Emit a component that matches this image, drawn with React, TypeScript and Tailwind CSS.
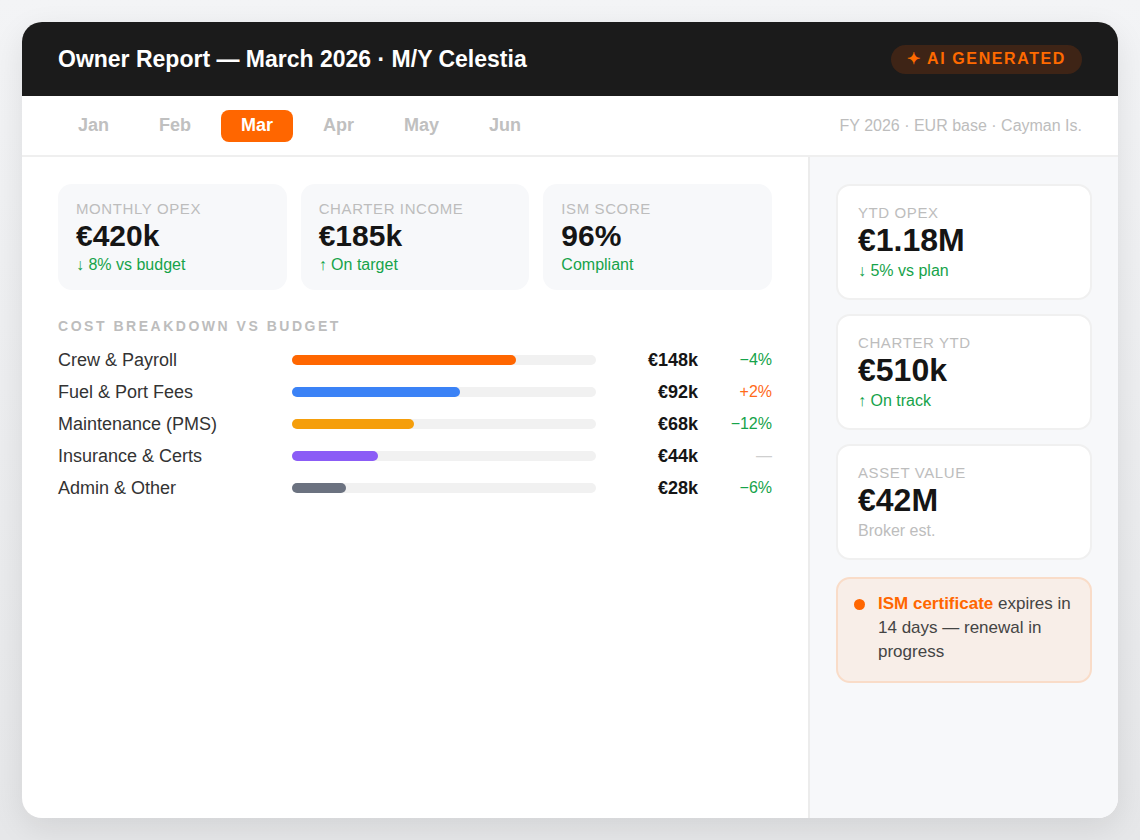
import React from "react";

interface costRowProps {
    label: string;
    pct: number;
    bar: string;
    value: string;
    delta: string;
    deltaColor: string;
}

const costRows: costRowProps[] = [
    { label: "Crew & Payroll", pct: 73.7, bar: "bg-[#ff6600]", value: "€148k", delta: "−4%", deltaColor: "text-[#16a34a]" },
    { label: "Fuel & Port Fees", pct: 55.3, bar: "bg-[#3b82f6]", value: "€92k", delta: "+2%", deltaColor: "text-[#ff6a1a]" },
    { label: "Maintenance (PMS)", pct: 40.1, bar: "bg-[#f59e0b]", value: "€68k", delta: "−12%", deltaColor: "text-[#16a34a]" },
    { label: "Insurance & Certs", pct: 28.3, bar: "bg-[#8b5cf6]", value: "€44k", delta: "—", deltaColor: "text-[#cfcfcf]" },
    { label: "Admin & Other", pct: 17.8, bar: "bg-[#6b7280]", value: "€28k", delta: "−6%", deltaColor: "text-[#16a34a]" },
];

const months = ["Jan", "Feb", "Mar", "Apr", "May", "Jun"];

const StatCard = ({ label, value, sub }: { label: string; value: string; sub: string }) => (
    <div className="flex-1 h-[106px] rounded-[14px] bg-[#f7f8fa] px-[18px] pt-[16px]">
        <div className="text-[15px] leading-[18px] text-[#bdbdbd] uppercase tracking-[0.04em]">{label}</div>
        <div className="text-[30px] leading-[36px] font-bold text-[#151515]">{value}</div>
        <div className="text-[16px] leading-[22px] text-[#16a34a]">{sub}</div>
    </div>
);

const SideCard = ({ label, value, sub, subColor }: { label: string; value: string; sub: string; subColor: string }) => (
    <div className="h-[116px] rounded-[14px] bg-white border-2 border-[#f0f0f0] px-[20px] pt-[18px]">
        <div className="text-[15px] leading-[18px] text-[#bdbdbd] uppercase tracking-[0.04em]">{label}</div>
        <div className="text-[32px] leading-[36px] font-bold text-[#151515]">{value}</div>
        <div className={`text-[16px] leading-[25px] ${subColor}`}>{sub}</div>
    </div>
);

export default function App() {
    return (
        <div
            className="w-[1140px] h-[840px] bg-gradient-to-b from-[#f3f4f6] to-[#e6e7e9] p-[22px]"
            style={{ fontFamily: '"Liberation Sans", Arial, sans-serif' }}>
            <div className="w-[1096px] h-[796px] rounded-[20px] overflow-hidden bg-white flex flex-col shadow-[0_10px_32px_rgba(0,0,0,0.09)]">
                {/* header */}
                <div className="h-[74px] shrink-0 bg-[#1b1b1b] flex items-center justify-between pl-[36px] pr-[36px]">
                    <div className="text-[23px] font-bold text-white">Owner Report — March 2026 · M/Y Celestia</div>
                    <div className="h-[29px] px-[16px] rounded-full bg-[#3e2416] flex items-center text-[16px] font-bold tracking-[0.1em] text-[#ff6a00]">
                        ✦ AI GENERATED
                    </div>
                </div>

                {/* month tabs */}
                <div className="h-[61px] shrink-0 border-b-2 border-[#efefef] flex items-center justify-between pl-[36px] pr-[36px]">
                    <div className="flex gap-[10px]">
                        {months.map((m) => (
                            <div
                                key={m}
                                className={
                                    m === "Mar"
                                        ? "h-[32px] px-[20px] rounded-[8px] bg-[#ff6600] text-white text-[18px] font-bold flex items-center"
                                        : "h-[32px] px-[20px] rounded-[8px] text-[#c0c0c0] text-[18px] font-bold flex items-center"
                                }>
                                {m}
                            </div>
                        ))}
                    </div>
                    <div className="text-[16px] text-[#bdbdbd]">FY 2026 · EUR base · Cayman Is.</div>
                </div>

                {/* body */}
                <div className="flex grow">
                    <div className="w-[788px] shrink-0 border-r-2 border-[#ececec] px-[36px] pt-[27px]">
                        <div className="flex gap-[14px]">
                            <StatCard label="Monthly OPEX" value="€420k" sub="↓ 8% vs budget" />
                            <StatCard label="Charter Income" value="€185k" sub="↑ On target" />
                            <StatCard label="ISM Score" value="96%" sub="Compliant" />
                        </div>

                        <div className="mt-[26px] text-[14px] font-bold tracking-[0.18em] text-[#bdbdbd]">COST BREAKDOWN VS BUDGET</div>

                        <div className="mt-[7px] flex flex-col">
                            {costRows.map((row) => (
                                <div key={row.label} className="grid grid-cols-[234px_304px_1fr_74px] items-center h-[32px]">
                                    <div className="text-[18px] text-[#333]">{row.label}</div>
                                    <div className="h-[10px] rounded-full bg-[#f1f1f1]">
                                        <div className={`h-full rounded-full ${row.bar}`} style={{ width: `${row.pct}%` }} />
                                    </div>
                                    <div className="text-right text-[18px] font-bold text-[#151515]">{row.value}</div>
                                    <div className={`text-right text-[16px] ${row.deltaColor}`}>{row.delta}</div>
                                </div>
                            ))}
                        </div>
                    </div>

                    <div className="grow bg-[#f7f8fa] px-[26px] pt-[27px] flex flex-col gap-[14px]">
                        <SideCard label="YTD OPEX" value="€1.18M" sub="↓ 5% vs plan" subColor="text-[#16a34a]" />
                        <SideCard label="Charter YTD" value="€510k" sub="↑ On track" subColor="text-[#16a34a]" />
                        <SideCard label="Asset Value" value="€42M" sub="Broker est." subColor="text-[#bdbdbd]" />
                        <div className="mt-[3px] h-[106px] rounded-[14px] bg-[#f8eee8] border-2 border-[#f9dcc8] pl-[16px] pr-[16px] pt-[13px] flex gap-[13px]">
                            <div className="w-[11px] h-[11px] rounded-full bg-[#ff6600] shrink-0 mt-[7px]" />
                            <div className="text-[17px] leading-[24px] text-[#444]">
                                <span className="font-bold text-[#ff6600]">ISM certificate</span> expires in 14 days — renewal in progress
                            </div>
                        </div>
                    </div>
                </div>
            </div>
        </div>
    );
}
